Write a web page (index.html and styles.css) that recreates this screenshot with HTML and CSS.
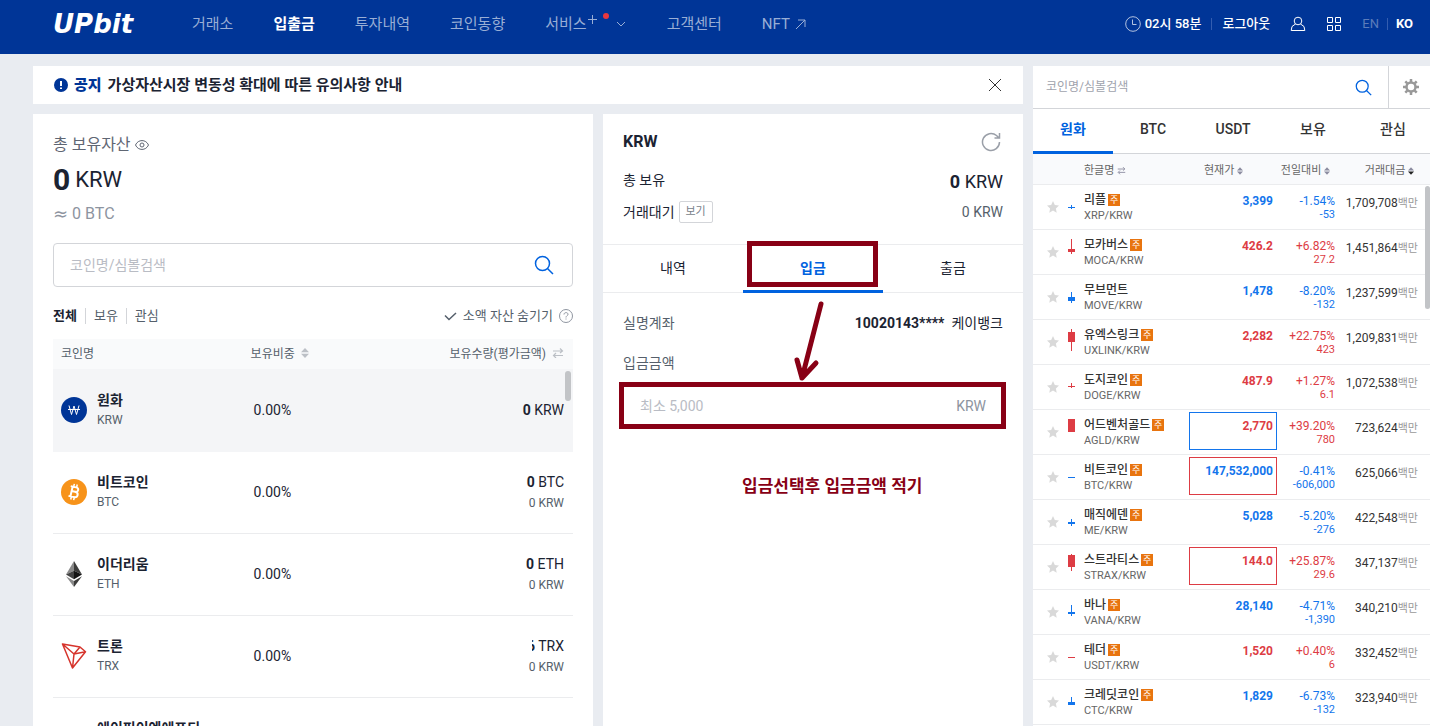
FILE: index.html
```html
<!DOCTYPE html>
<html lang="ko">
<head>
    <meta charset="UTF-8">
    <meta name="viewport" content="width=device-width, initial-scale=1.0">
    <title>입출금 - UPbit</title>
    <link rel="stylesheet" href="styles.css">
</head>
<body>
    <!-- shared icons -->
    <svg class="defs" width="0" height="0" aria-hidden="true">
        <symbol id="star" viewBox="0 0 12 12"><path d="M6 0l1.800 4 4.200.5-3.100 2.900.8 4.300L6 9.600l-3.700 2.100.8-4.300L0 4.500 4.200 4z" fill="#d9d9d9"/></symbol>
        <symbol id="sort" viewBox="0 0 8 10"><path d="M4 0l4 4.200H0zM4 10L0 5.800h8z" fill="currentColor"/></symbol>
        <symbol id="swap" viewBox="0 0 12 10"><path d="M1 3h9M8 .5L10.500 3 8 5M11 7.500H2M4 5L1.500 7.500 4 10" fill="none" stroke="currentColor" stroke-width="1.200"/></symbol>
        <symbol id="search" viewBox="0 0 20 20"><circle cx="8.500" cy="8.500" r="7"/><path d="M13.500 13.500l5.500 5.500"/></symbol>
    </svg>

    <header class="header">
        <a class="logo" href="#">UPbit</a>
        <nav class="nav">
            <a href="#">거래소</a>
            <a href="#" class="active">입출금</a>
            <a href="#">투자내역</a>
            <a href="#">코인동향</a>
            <a href="#" class="service">서비스<svg width="40" height="24" viewBox="0 0 40 24" fill="none" stroke="currentColor"><path d="M1 7.500h9M5.500 3v9"/><circle cx="19" cy="4" r="3" fill="#e8373e" stroke="none"/><path d="M30 10l4 4 4-4"/></svg></a>
            <a href="#">고객센터</a>
            <a href="#">NFT <svg width="11" height="11" viewBox="0 0 11 11" fill="none" stroke="currentColor"><path d="M1 10L10 1M3 1h7v7"/></svg></a>
        </nav>
        <div class="user">
            <svg width="16" height="16" viewBox="0 0 16 16" fill="none" stroke="#b3c2e0"><circle cx="8" cy="8" r="7.300"/><path d="M7.500 3.500v5h4"/></svg>
            <span class="time">02시 58분</span>
            <span class="bar"></span>
            <a href="#" class="logout">로그아웃</a>
            <a href="#" class="my" aria-label="MY"><svg width="16" height="16" viewBox="0 0 16 16" fill="none" stroke="#fff"><circle cx="8" cy="5" r="3.800"/><path d="M5.500 8L2 10.500l-.8 4h13.600l-.8-4L10.500 8"/></svg></a>
            <a href="#" class="all" aria-label="전체메뉴"><svg width="16" height="16" viewBox="0 0 16 16" fill="none" stroke="#fff"><path d="M1.500 1.500h5v5h-5zM9.500 1.500h5v5h-5zM1.500 9.500h5v5h-5zM9.500 9.500h5v5h-5z"/></svg></a>
            <a href="#" class="lang off">EN</a>
            <span class="bar"></span>
            <a href="#" class="lang">KO</a>
        </div>
    </header>

    <div class="page">
        <main class="main">
            <div class="notice">
                <svg width="14" height="14" viewBox="0 0 14 14"><circle cx="7" cy="7" r="7" fill="#003597"/><path d="M7 3v5M7 9.500v1.500" stroke="#fff" stroke-width="2"/></svg>
                <b>공지</b>
                <a href="#">가상자산시장 변동성 확대에 따른 유의사항 안내</a>
                <button class="close" aria-label="닫기"><svg width="14" height="14" viewBox="0 0 14 14" stroke="#333"><path d="M1 1l12 12M13 1L1 13"/></svg></button>
            </div>

            <div class="panels">
                <section class="assets">
                    <h2 class="assets-title">총 보유자산 <svg width="14" height="10" viewBox="0 0 14 10" fill="none" stroke="#5f6673"><path d="M.5 5C3-.9 11-.9 13.500 5 11 10.900 3 10.900.5 5z"/><circle cx="7" cy="5" r="2"/></svg></h2>
                    <p class="total"><b>0</b> KRW</p>
                    <p class="approx"><span>≈</span> 0 BTC</p>

                    <div class="search">
                        <input type="text" placeholder="코인명/심볼검색" aria-label="코인명/심볼검색">
                        <button aria-label="검색"><svg class="blue" width="20" height="20"><use href="#search"/></svg></button>
                    </div>

                    <div class="filters">
                        <a href="#" class="on">전체</a>
                        <a href="#">보유</a>
                        <a href="#">관심</a>
                        <div class="hide-small">
                            <svg width="13" height="9" viewBox="0 0 13 9" fill="none" stroke="#555f6b" stroke-width="1.500"><path d="M1 3.500l4 4L12 1"/></svg>
                            <button>소액 자산 숨기기</button>
                            <svg width="14" height="14" viewBox="0 0 14 14" fill="none" stroke="#8f95a0"><circle cx="7" cy="7" r="6.500"/><path d="M5 5.500C5 3 9 3 9 5.300 9 6.600 7 6.700 7 8.500M7 9.500v1"/></svg>
                        </div>
                    </div>

                    <div class="scroller">
                        <table class="coins">
                            <thead>
                                <tr>
                                    <th class="c-name">코인명</th>
                                    <th class="c-rate">보유비중 <svg width="8" height="10"><use href="#sort"/></svg></th>
                                    <th class="c-amount">보유수량(평가금액) <svg width="12" height="10"><use href="#swap"/></svg></th>
                                </tr>
                            </thead>
                            <tbody>
                                <tr class="selected">
                                    <td>
                                        <div class="coin">
                                            <svg width="26" height="26" viewBox="0 0 26 26" fill="none" stroke="#fff"><circle cx="13" cy="13" r="13" fill="#003597" stroke="none"/><path d="M8 8.500l2.500 9L13 9l2.500 8.500 2.500-9M7 12.500h12"/></svg>
                                            <div><b>원화</b><span>KRW</span></div>
                                        </div>
                                    </td>
                                    <td class="rate">0.00%</td>
                                    <td class="amount"><p><b>0</b> KRW</p></td>
                                </tr>
                                <tr>
                                    <td>
                                        <div class="coin">
                                            <svg width="26" height="26" viewBox="0 0 26 26" fill="none" stroke="#fff" stroke-width="2"><circle cx="13" cy="13" r="13" fill="#f7931a" stroke="none"/><g transform="rotate(13 13 13)"><path d="M8.500 8H14c3.500 0 3.500 4.500 0 4.500h-3.500M14 12.500c4.300 0 4.300 5.500 0 5.500H8.500M10.500 8v10"/><path d="M11.500 5v3M14.500 5v3M11.500 18v3M14.500 18v3" stroke-width="1.500"/></g></svg>
                                            <div><b>비트코인</b><span>BTC</span></div>
                                        </div>
                                    </td>
                                    <td class="rate">0.00%</td>
                                    <td class="amount"><p><b>0</b> BTC</p><span>0 KRW</span></td>
                                </tr>
                                <tr>
                                    <td>
                                        <div class="coin">
                                            <svg width="26" height="26" viewBox="0 0 26 26"><path d="M13 0L5 13.500l8-3.700z" fill="#8a8a8a"/><path d="M13 0l8 13.500-8-3.700z" fill="#3c3c3b"/><path d="M5 13.500l8-3.700v8.500z" fill="#444"/><path d="M21 13.500l-8-3.700v8.500z" fill="#141414"/><path d="M5 15.200l8 4.700V26z" fill="#8a8a8a"/><path d="M21 15.200l-8 4.700V26z" fill="#3c3c3b"/></svg>
                                            <div><b>이더리움</b><span>ETH</span></div>
                                        </div>
                                    </td>
                                    <td class="rate">0.00%</td>
                                    <td class="amount"><p><b>0</b> ETH</p><span>0 KRW</span></td>
                                </tr>
                                <tr>
                                    <td>
                                        <div class="coin">
                                            <svg width="26" height="26" viewBox="0 0 26 26" fill="none" stroke="#d6342c" stroke-width="1.500" stroke-linejoin="round"><path d="M1.500 1L19 4l5.500 4.700L11.500 25zM1.500 1l11.500 10L11.500 25M13 11l11.500-2.300M13 11l6-7"/></svg>
                                            <div><b>트론</b><span>TRX</span></div>
                                        </div>
                                    </td>
                                    <td class="rate">0.00%</td>
                                    <td class="amount"><p><b class="masked">6</b> TRX</p><span>0 KRW</span></td>
                                </tr>
                                <tr>
                                    <td>
                                        <div class="coin">
                                            <i class="no-icon"></i>
                                            <div><b>에이피이엔에프티</b><span>NFT</span></div>
                                        </div>
                                    </td>
                                    <td class="rate">0.00%</td>
                                    <td class="amount"><span>0 KRW</span></td>
                                </tr>
                            </tbody>
                        </table>
                        <i class="thumb"></i>
                    </div>
                </section>

                <section class="deposit">
                    <div class="summary">
                        <div class="line head">
                            <h2>KRW</h2>
                            <button aria-label="새로고침"><svg width="20" height="20" viewBox="0 0 20 20" fill="none" stroke="#9a9fa8" stroke-width="1.500"><path d="M18.500 10A8.500 8.500 0 1 1 15.500 3.500l2 2M18.500 1v5h-5"/></svg></button>
                        </div>
                        <div class="line hold"><span>총 보유</span><p class="big"><b>0</b> KRW</p></div>
                        <div class="line wait"><span>거래대기</span><button class="view">보기</button><p>0 KRW</p></div>
                    </div>
                    <div class="tabs">
                        <a href="#">내역</a>
                        <a href="#" class="on">입금<i class="mark tab-mark"></i></a>
                        <a href="#">출금</a>
                    </div>
                    <div class="form">
                        <div class="line account"><span>실명계좌</span><p><b>10020143****</b>케이뱅크</p></div>
                        <label for="amount">입금금액</label>
                        <div class="field">
                            <input id="amount" type="text" placeholder="최소 5,000">
                            <span>KRW</span>
                            <i class="mark field-mark"></i>
                        </div>
                    </div>
                    <svg class="arrow" width="40" height="84" viewBox="0 0 40 84" fill="none" stroke="#880015" stroke-width="5" stroke-linecap="round" stroke-linejoin="round"><path d="M28 5L9 79M4 61l5 18 14-15"/></svg>
                    <p class="memo">입금선택후 입금금액 적기</p>
                </section>
            </div>
        </main>

        <aside class="market">
            <div class="market-search">
                <input type="text" placeholder="코인명/심볼검색" aria-label="코인명/심볼검색">
                <button class="find" aria-label="검색"><svg class="blue" width="17" height="17"><use href="#search"/></svg></button>
                <button class="gear" aria-label="설정"><svg width="16" height="16" viewBox="0 0 16 16" fill="none" stroke="#999"><circle cx="8" cy="8" r="4.500" stroke-width="2.500"/><path d="M8 0v3M8 13v3M0 8h3M13 8h3M2.300 2.300l2 2M11.700 11.700l2 2M2.300 13.700l2-2M11.700 4.300l2-2" stroke-width="2.500"/></svg></button>
            </div>
            <div class="market-tabs">
                <a href="#" class="on">원화</a>
                <a href="#">BTC</a>
                <a href="#">USDT</a>
                <a href="#">보유</a>
                <a href="#">관심</a>
            </div>
            <div class="scroller">
                <table class="prices">
                    <thead>
                        <tr>
                            <th class="m-star"></th>
                            <th class="m-candle"></th>
                            <th class="m-name">한글명 <svg width="9" height="9"><use href="#swap"/></svg></th>
                            <th class="m-price">현재가 <svg width="6" height="8"><use href="#sort"/></svg></th>
                            <th class="m-change">전일대비 <svg width="6" height="8"><use href="#sort"/></svg></th>
                            <th class="m-volume">거래대금 <svg width="6" height="8" viewBox="0 0 8 10"><path d="M4 0l4 4.200H0z" fill="#8c8ca0"/><path d="M4 10L0 5.800h8z" fill="#222"/></svg></th>
                        </tr>
                    </thead>
                    <tbody>
                        <tr class="down">
                            <td><svg class="star"><use href="#star"/></svg></td>
                            <td><svg class="candle"><path d="M0 17h7v1H0zM3 15h1v4H3z"/></svg></td>
                            <td class="name"><b>리플</b><em>주</em><span>XRP/KRW</span></td>
                            <td><div class="price">3,399</div></td>
                            <td class="change">-1.54%<span>-53</span></td>
                            <td class="volume">1,709,708<i>백만</i></td>
                        </tr>
                        <tr class="up">
                            <td><svg class="star"><use href="#star"/></svg></td>
                            <td><svg class="candle"><path d="M0 14h7v3H0zM3 4h1v15H3z"/></svg></td>
                            <td class="name"><b>모카버스</b><em>주</em><span>MOCA/KRW</span></td>
                            <td><div class="price">426.2</div></td>
                            <td class="change">+6.82%<span>27.2</span></td>
                            <td class="volume">1,451,864<i>백만</i></td>
                        </tr>
                        <tr class="down">
                            <td><svg class="star"><use href="#star"/></svg></td>
                            <td><svg class="candle"><path d="M0 17h7v4H0zM3 12h1v11H3z"/></svg></td>
                            <td class="name"><b>무브먼트</b><span>MOVE/KRW</span></td>
                            <td><div class="price">1,478</div></td>
                            <td class="change">-8.20%<span>-132</span></td>
                            <td class="volume">1,237,599<i>백만</i></td>
                        </tr>
                        <tr class="up">
                            <td><svg class="star"><use href="#star"/></svg></td>
                            <td><svg class="candle"><path d="M0 7h7v10H0zM3 4h1v22H3z"/></svg></td>
                            <td class="name"><b>유엑스링크</b><em>주</em><span>UXLINK/KRW</span></td>
                            <td><div class="price">2,282</div></td>
                            <td class="change">+22.75%<span>423</span></td>
                            <td class="volume">1,209,831<i>백만</i></td>
                        </tr>
                        <tr class="up">
                            <td><svg class="star"><use href="#star"/></svg></td>
                            <td><svg class="candle"><path d="M0 16h7v1H0zM3 13h1v5H3z"/></svg></td>
                            <td class="name"><b>도지코인</b><em>주</em><span>DOGE/KRW</span></td>
                            <td><div class="price">487.9</div></td>
                            <td class="change">+1.27%<span>6.1</span></td>
                            <td class="volume">1,072,538<i>백만</i></td>
                        </tr>
                        <tr class="up">
                            <td><svg class="star"><use href="#star"/></svg></td>
                            <td><svg class="candle"><path d="M0 4h7v13H0z"/></svg></td>
                            <td class="name"><b>어드벤처골드</b><em>주</em><span>AGLD/KRW</span></td>
                            <td><div class="price bid">2,770</div></td>
                            <td class="change">+39.20%<span>780</span></td>
                            <td class="volume">723,624<i>백만</i></td>
                        </tr>
                        <tr class="down">
                            <td><svg class="star"><use href="#star"/></svg></td>
                            <td><svg class="candle"><path d="M0 17h7v1H0z"/></svg></td>
                            <td class="name"><b>비트코인</b><em>주</em><span>BTC/KRW</span></td>
                            <td><div class="price ask">147,532,000</div></td>
                            <td class="change">-0.41%<span>-606,000</span></td>
                            <td class="volume">625,066<i>백만</i></td>
                        </tr>
                        <tr class="down">
                            <td><svg class="star"><use href="#star"/></svg></td>
                            <td><svg class="candle"><path d="M0 17h7v2H0zM3 14h1v7H3z"/></svg></td>
                            <td class="name"><b>매직에덴</b><em>주</em><span>ME/KRW</span></td>
                            <td><div class="price">5,028</div></td>
                            <td class="change">-5.20%<span>-276</span></td>
                            <td class="volume">422,548<i>백만</i></td>
                        </tr>
                        <tr class="up">
                            <td><svg class="star"><use href="#star"/></svg></td>
                            <td><svg class="candle"><path d="M0 5h7v12H0zM3 4h1v17H3z"/></svg></td>
                            <td class="name"><b>스트라티스</b><em>주</em><span>STRAX/KRW</span></td>
                            <td><div class="price ask">144.0</div></td>
                            <td class="change">+25.87%<span>29.6</span></td>
                            <td class="volume">347,137<i>백만</i></td>
                        </tr>
                        <tr class="down">
                            <td><svg class="star"><use href="#star"/></svg></td>
                            <td><svg class="candle"><path d="M0 17h7v2H0zM3 10h1v11H3z"/></svg></td>
                            <td class="name"><b>바나</b><em>주</em><span>VANA/KRW</span></td>
                            <td><div class="price">28,140</div></td>
                            <td class="change">-4.71%<span>-1,390</span></td>
                            <td class="volume">340,210<i>백만</i></td>
                        </tr>
                        <tr class="up">
                            <td><svg class="star"><use href="#star"/></svg></td>
                            <td><svg class="candle"><path d="M0 17h7v1H0z"/></svg></td>
                            <td class="name"><b>테더</b><em>주</em><span>USDT/KRW</span></td>
                            <td><div class="price">1,520</div></td>
                            <td class="change">+0.40%<span>6</span></td>
                            <td class="volume">332,452<i>백만</i></td>
                        </tr>
                        <tr class="down">
                            <td><svg class="star"><use href="#star"/></svg></td>
                            <td><svg class="candle"><path d="M0 17h7v3H0zM3 12h1v6H3z"/></svg></td>
                            <td class="name"><b>크레딧코인</b><em>주</em><span>CTC/KRW</span></td>
                            <td><div class="price">1,829</div></td>
                            <td class="change">-6.73%<span>-132</span></td>
                            <td class="volume">323,940<i>백만</i></td>
                        </tr>
                    </tbody>
                </table>
                <i class="thumb"></i>
            </div>
        </aside>
    </div>
</body>
</html>
```

FILE: styles.css
```css
* {
    box-sizing: border-box;
}
body {
    margin: 0;
    height: 100vh;
    display: flex;
    flex-direction: column;
    overflow: hidden;
    background-color: #e9ecf1;
    color: #1b2332;
    font-family: Roboto, "Noto Sans CJK KR", sans-serif;
    font-size: 14px;
    line-height: 20px;
}
h2, p {
    margin: 0;
    font-weight: normal;
}
a {
    color: inherit;
    text-decoration: none;
}
button {
    padding: 0;
    border: none;
    background: none;
    font: inherit;
    color: inherit;
    cursor: pointer;
}
button svg {
    display: block;
}
input {
    flex: 1;
    min-width: 0;
    height: 100%;
    padding: 0;
    border: none;
    outline: none;
    background: none;
    font: inherit;
}
table {
    width: 100%;
    border-collapse: collapse;
    table-layout: fixed;
}
th, td {
    padding: 0;
    text-align: left;
    font-weight: normal;
}
.defs {
    position: absolute;
}
.blue {
    fill: none;
    stroke: #0062df;
    stroke-width: 1.5;
}

/* header */
.header {
    flex: none;
    height: 54px;
    padding: 0 17px 6px 53px;
    display: flex;
    align-items: center;
    background-color: #003597;
    color: #fff;
}
.logo {
    width: 139px;
    font: italic bold 26px/32px "DejaVu Sans", sans-serif;
}
.nav {
    display: flex;
    gap: 40px;
    font-size: 15px;
    color: #99aed5;
}
.nav a {
    display: flex;
    align-items: center;
    gap: 5px;
    white-space: nowrap;
}
.nav .active {
    color: #fff;
    font-weight: bold;
}
.nav .service {
    gap: 0;
}
.user {
    margin-left: auto;
    display: flex;
    align-items: center;
    font-size: 13px;
    font-weight: 500;
}
.time {
    margin-left: 4px;
}
.bar {
    width: 1px;
    height: 12px;
    margin: 0 10px;
    background-color: #335db0;
}
.my, .all {
    height: 16px;
    margin-left: 20px;
}
.lang {
    font-weight: bold;
}
.lang.off {
    margin-left: 20px;
    font-weight: normal;
    color: #5c7cba;
}
.user .off + .bar {
    margin: 0 8px;
}

/* layout */
.page {
    flex: 1;
    min-height: 0;
    display: flex;
    gap: 10px;
    padding: 12px 0 0 33px;
}
.main {
    flex: 1;
    min-width: 0;
    display: flex;
    flex-direction: column;
    gap: 10px;
}
.panels {
    flex: 1;
    min-height: 0;
    display: grid;
    grid-template-columns: 4fr 3fr;
    gap: 10px;
}
.scroller {
    position: relative;
}
.thumb {
    position: absolute;
    border-radius: 3px;
    background-color: #c2c4c7;
}

/* notice */
.notice {
    height: 38px;
    padding: 0 21px;
    display: flex;
    align-items: center;
    gap: 6px;
    background-color: #fff;
    font-weight: bold;
    font-size: 15px;
}
.notice b {
    color: #003597;
}
.notice .close {
    margin-left: auto;
}

/* my assets */
.assets {
    min-width: 0;
    padding: 21px 20px 0;
    background-color: #fff;
}
.assets-title {
    font-size: 16px;
    color: #5f6673;
}
.total {
    height: 40px;
    margin-top: 5px;
    display: flex;
    align-items: center;
    gap: 5px;
    font-size: 22px;
}
.total b {
    font-size: 30px;
}
.approx {
    height: 20px;
    margin-top: 4px;
    display: flex;
    align-items: center;
    gap: 4px;
    font-size: 16px;
    color: #8d94a0;
}
.approx span {
    font-family: "DejaVu Sans", sans-serif;
    font-size: 18px;
}
.search {
    height: 44px;
    margin-top: 19px;
    padding: 0 18px 0 16px;
    display: flex;
    align-items: center;
    border: 1px solid #d3d5d9;
    border-radius: 4px;
}
.search input::placeholder {
    color: #b9bcc4;
}
.filters {
    height: 20px;
    margin-top: 19px;
    display: flex;
    align-items: center;
    font-size: 13px;
    color: #555f6b;
}
.filters a {
    line-height: 16px;
}
.filters a + a {
    margin-left: 8px;
    padding-left: 8px;
    border-left: 1px solid #d3d5d9;
}
.filters .on {
    font-weight: bold;
    color: #1b2332;
}
.hide-small {
    margin-left: auto;
    display: flex;
    align-items: center;
    gap: 6px;
}
.assets .scroller {
    margin-top: 13px;
}
.assets .thumb {
    top: 32px;
    right: 2px;
    width: 6px;
    height: 30px;
}
.coins th {
    height: 30px;
    background-color: #f9fafb;
    font-size: 12px;
    color: #555f6b;
}
.coins th svg {
    margin-left: 3px;
    color: #bcc0c6;
}
.coins .c-name {
    width: 38%;
    padding-left: 8px;
}
.coins .c-rate {
    width: 22%;
}
.coins .c-amount {
    padding-right: 9px;
    text-align: right;
}
.coins td {
    height: 82px;
    border-bottom: 1px solid #ebecee;
}
.coins .selected td {
    border-bottom-color: #f4f5f7;
    background-color: #f4f5f7;
}
.coin {
    padding-left: 8px;
    display: flex;
    align-items: center;
    gap: 10px;
    white-space: nowrap;
}
.coin svg, .no-icon {
    flex: none;
    width: 26px;
    height: 26px;
}
.coin b, .coin span {
    display: block;
}
.coin span, .amount span {
    font-size: 12px;
    color: #555f6b;
}
.coins .rate {
    padding-left: 3px;
}
.coins .amount {
    padding-right: 9px;
    text-align: right;
}
.masked {
    display: inline-block;
    width: 3px;
    height: 20px;
    overflow: hidden;
    direction: rtl;
    vertical-align: bottom;
}

/* deposit */
.deposit {
    min-width: 0;
    position: relative;
    background-color: #fff;
}
.summary {
    height: 131px;
    padding: 17px 20px 0;
    border-bottom: 1px solid #ebecee;
}
.line {
    display: flex;
    align-items: center;
}
.line p {
    margin-left: auto;
}
.head {
    height: 22px;
}
.head h2 {
    font-size: 16px;
    font-weight: bold;
}
.head button {
    margin-left: auto;
    padding-right: 2px;
}
.hold {
    height: 20px;
    margin-top: 17px;
}
.hold .big {
    padding-top: 4px;
    font-size: 18px;
}
.wait {
    margin-top: 11px;
}
.wait p {
    color: #555f6b;
}
.view {
    width: 34px;
    height: 22px;
    margin-left: 4px;
    border: 1px solid #d3d5d9;
    border-radius: 2px;
    font-size: 11px;
    color: #777e89;
}
.tabs {
    height: 48px;
    display: flex;
    border-bottom: 1px solid #ebecee;
}
.tabs a {
    flex: 1;
    height: 48px;
    position: relative;
    text-align: center;
    line-height: 46px;
}
.tabs .on {
    border-bottom: 3px solid #0062df;
    font-weight: bold;
    color: #0062df;
}
.form {
    padding: 20px;
}
.account span, .form label {
    color: #555f6b;
}
.account b {
    margin-right: 7px;
}
.form label {
    display: block;
    margin-top: 20px;
}
.field {
    position: relative;
    height: 39px;
    margin-top: 13px;
    padding: 0 17px;
    display: flex;
    align-items: center;
    color: #8d94a0;
}
.field input::placeholder {
    color: #b9bcc4;
}

/* hand drawn guide marks */
.mark {
    position: absolute;
    border: 5px solid #880015;
}
.tab-mark {
    top: -4px;
    left: 4px;
    right: 5px;
    height: 46px;
}
.field-mark {
    top: -4px;
    bottom: -4px;
    left: -4px;
    right: -3px;
}
.arrow {
    position: absolute;
    top: 185px;
    left: 190px;
}
.memo {
    position: absolute;
    top: 362px;
    left: 139px;
    font-size: 17px;
    font-weight: bold;
    color: #880015;
}

/* market list */
.market {
    flex: none;
    width: 397px;
    background-color: #fff;
    overflow: hidden;
}
.market-search {
    height: 43px;
    padding-left: 13px;
    display: flex;
    align-items: center;
    border-bottom: 1px solid #d3d5d9;
    font-size: 12px;
}
.market-search input::placeholder {
    color: #a0a3ad;
}
.market-search .find {
    margin-right: 16px;
}
.market-search .gear {
    width: 42px;
    height: 42px;
    padding-left: 14px;
    border-left: 1px solid #d3d5d9;
}
.market-tabs {
    height: 45px;
    margin-right: -3px;
    display: flex;
    border-bottom: 1px solid #d3d5d9;
    font-weight: 500;
    color: #333;
}
.market-tabs a {
    flex: 1;
    height: 45px;
    text-align: center;
    line-height: 41px;
}
.market-tabs .on {
    border-bottom: 3px solid #0062df;
    font-weight: bold;
    color: #0062df;
}
.market .thumb {
    top: 32px;
    right: 0;
    width: 5px;
    height: 123px;
}
.prices th {
    height: 30px;
    padding-top: 4px;
    border-bottom: 1px solid #ebecee;
    background-color: #f9fafc;
    font-size: 11px;
    color: #666;
    text-align: right;
    white-space: nowrap;
}
.prices th svg {
    color: #8c8ca0;
    vertical-align: -1px;
}
.prices .m-star {
    width: 35px;
}
.prices .m-candle {
    width: 16px;
}
.prices .m-name {
    text-align: left;
}
.prices .m-price {
    width: 88px;
    padding-right: 34px;
}
.prices .m-change {
    width: 58px;
    padding-right: 5px;
}
.prices .m-volume {
    width: 95px;
    padding-right: 16px;
}
.prices td {
    height: 45px;
    border-bottom: 1px solid #ebecee;
    vertical-align: top;
    font-size: 12px;
    line-height: 14px;
    text-align: right;
}
.prices td svg {
    display: block;
}
.star {
    width: 12px;
    height: 12px;
    margin: 16px 0 0 14px;
}
.candle {
    width: 7px;
    height: 30px;
    margin-top: 5px;
    fill: currentColor;
}
.up {
    color: #dd3c44;
}
.down {
    color: #1375ec;
}
.prices .name {
    padding-top: 8px;
    text-align: left;
    line-height: 15px;
    color: #666;
    white-space: nowrap;
}
.name b {
    font-weight: 500;
    color: #333;
}
.name em {
    display: inline-block;
    width: 12px;
    height: 12px;
    margin-left: 2px;
    background-color: #e8740f;
    color: #fff;
    font-size: 9px;
    font-style: normal;
    line-height: 12px;
    text-align: center;
    vertical-align: 1px;
}
.name span, .change span {
    display: block;
    font-size: 11px;
}
.price {
    height: 38px;
    margin-top: 2px;
    padding: 6px 3px 0 0;
    border: 1px solid transparent;
    font-weight: bold;
}
.bid {
    border-color: #1375ec;
}
.ask {
    border-color: #dd3c44;
}
.prices .change {
    padding-top: 9px;
}
.prices .volume {
    padding: 11px 12px 0 0;
    color: #333;
}
.volume i {
    font-size: 11px;
    font-style: normal;
    color: #999;
}
```
